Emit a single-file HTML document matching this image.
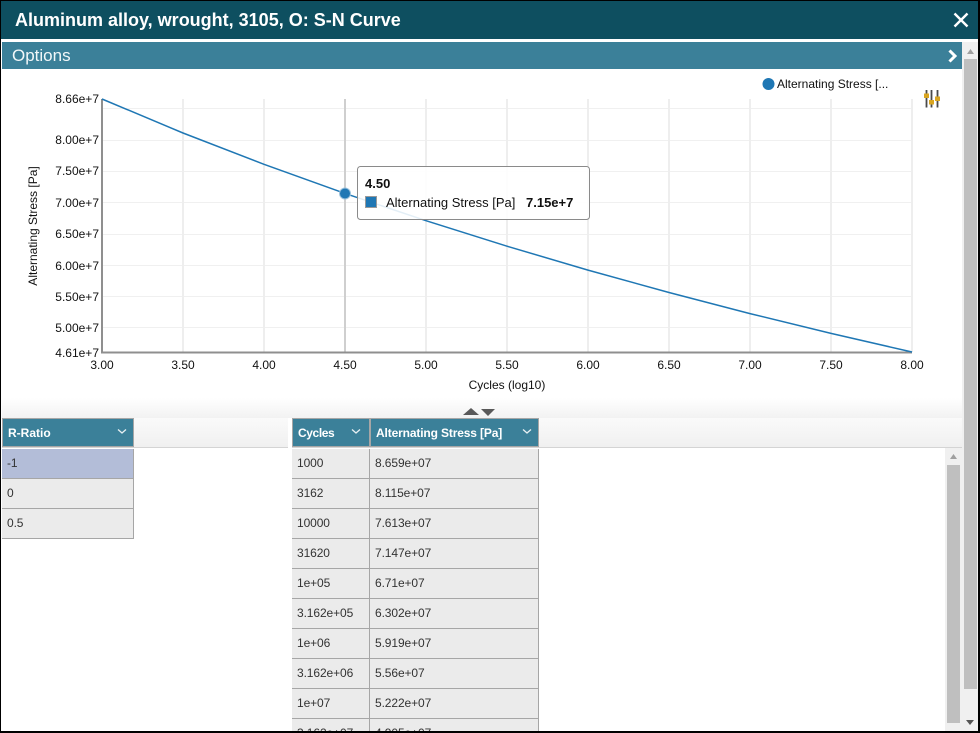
<!DOCTYPE html>
<html><head><meta charset="utf-8">
<style>
html,body{margin:0;padding:0;background:#fff;width:980px;height:733px;overflow:hidden}
body{position:relative;font-family:"Liberation Sans",sans-serif;color:#111}
.a{position:absolute}
.t{position:absolute;white-space:nowrap}
.hd{position:absolute;background:#3b8099;border:1px solid #a6a6a6;box-sizing:border-box;color:#fff;font-weight:bold;font-size:12px;line-height:28px;padding-left:5px}
.hd svg{position:absolute;top:9px}
.c{position:absolute;box-sizing:border-box;background:#ebebeb;border-right:1px solid #a6a6a6;border-bottom:1px solid #a6a6a6;font-size:12px;line-height:29px;padding-left:5px;color:#333;height:30px;letter-spacing:-.1px}
svg text{font-family:"Liberation Sans",sans-serif;font-size:12px;fill:#111}
#wrap{position:absolute;left:0;top:0;width:980px;height:733px;overflow:hidden}
</style></head><body>
<div id="wrap">
<div class="a" style="left:0;top:0;width:980px;height:39px;background:#0e4f60"></div>
<div class="t" style="left:15px;top:9px;font-size:18px;font-weight:bold;color:#fff;line-height:22px">Aluminum alloy, wrought, 3105, O: S-N Curve</div>
<svg class="a" style="left:952px;top:11px" width="18" height="18"><path d="M2.5 2.5L15.5 15.5M15.5 2.5L2.5 15.5" stroke="#fff" stroke-width="2.4" fill="none"/></svg>
<div class="a" style="left:2px;top:42px;width:960px;height:27px;background:#3b8099"></div>
<div class="t" style="left:12px;top:46px;font-size:17px;color:#f2f7f9;line-height:20px">Options</div>
<svg class="a" style="left:946px;top:48px" width="14" height="16"><path d="M3.5 2.5L9 8L3.5 13.500" stroke="#fff" stroke-width="3" fill="none"/></svg>

<svg class="a" style="left:0;top:70px" width="964" height="345" viewBox="0 70 964 345">
<g stroke="#f0f0f0" stroke-width="1" fill="none">
<path d="M102 108.5H912M102 140.5H912M102 171.5H912M102 202.5H912M102 234.5H912M102 265.5H912M102 296.5H912M102 327.5H912"/>
</g>
<g stroke="#eeeeee" stroke-width="2" fill="none">
<path d="M183 99V352M264 99V352M426 99V352M507 99V352M588 99V352M669 99V352M750 99V352M831 99V352M912 99V352"/>
</g>
<path d="M345 99V352" stroke="#cfcfcf" stroke-width="2"/>
<path d="M102 99V352.500H912" stroke="#8f8f8f" stroke-width="2" fill="none"/>
<polyline fill="none" stroke="#1f77b4" stroke-width="1.5" points="102,99 183,133 264,164.300 345,193.400 426,220.700 507,246.200 588,270.100 669,292.500 750,313.600 831,333.400 912,352"/>
<circle cx="345" cy="193.500" r="5.500" fill="#1f77b4" stroke="#9dc3dd" stroke-width="1"/>
<g text-anchor="end">
<text x="99" y="103">8.66e+7</text><text x="99" y="144">8.00e+7</text><text x="99" y="175">7.50e+7</text><text x="99" y="207">7.00e+7</text><text x="99" y="238">6.50e+7</text><text x="99" y="270">6.00e+7</text><text x="99" y="301">5.50e+7</text><text x="99" y="332">5.00e+7</text><text x="99" y="357">4.61e+7</text>
</g>
<g text-anchor="middle">
<text x="102" y="369">3.00</text><text x="183" y="369">3.50</text><text x="264" y="369">4.00</text><text x="345" y="369">4.50</text><text x="426" y="369">5.00</text><text x="507" y="369">5.50</text><text x="588" y="369">6.00</text><text x="669" y="369">6.50</text><text x="750" y="369">7.00</text><text x="831" y="369">7.50</text><text x="912" y="369">8.00</text>
<text x="507" y="389">Cycles (log10)</text>
<text transform="translate(37 226) rotate(-90)">Alternating Stress [Pa]</text>
</g>
<circle cx="768.500" cy="84" r="6" fill="#1f77b4"/>
<text x="777" y="88">Alternating Stress [...</text>
<g fill="none" stroke="#4a4a4a" stroke-width="1.800"><path d="M926.500 90V107.500M931.500 90V107.500M937.500 90V107.500"/></g>
<g fill="#d9a520"><rect x="924" y="93.500" width="5" height="4.500"/><rect x="929" y="100" width="5" height="4.500"/><rect x="935" y="96.500" width="5" height="4.500"/></g>
<rect x="357.500" y="166.500" width="232" height="53" rx="3" fill="#fff" fill-opacity=".88" stroke="#8a8a8a"/>
<text x="365" y="188" style="font-weight:bold;font-size:13px">4.50</text>
<rect x="365.500" y="196.500" width="11" height="11" fill="#1f77b4" stroke="#9a9a9a"/>
<text x="386" y="207" style="font-size:13px">Alternating Stress [Pa]</text>
<text x="526" y="207" style="font-weight:bold;font-size:13px">7.15e+7</text>
</svg>

<div class="a" style="left:2px;top:398px;width:962px;height:20px;background:linear-gradient(#fff,#f2f2f2)"></div>
<svg class="a" style="left:462px;top:407px" width="34" height="9"><path d="M1 8L9 1L17 8Z" fill="#595959"/><path d="M19 2H33L26 9Z" fill="#595959"/></svg>
<div class="a" style="left:2px;top:418px;width:286px;height:30px;background:linear-gradient(#fafafa,#f0f0f0);border-bottom:1px solid #d4d4d4;box-sizing:border-box"></div>
<div class="a" style="left:292px;top:418px;width:670px;height:30px;background:linear-gradient(#fafafa,#f0f0f0);border-bottom:1px solid #d4d4d4;box-sizing:border-box"></div>

<div class="hd" style="left:2px;top:418px;width:132px;height:29px">R-Ratio<svg style="left:113px" width="12" height="8"><path d="M2 1.500L6 5L10 1.500" stroke="#e8f0f3" stroke-width="1.300" fill="none"/></svg></div>
<div class="c" style="left:2px;top:449px;width:132px;background:#b3bdd8">-1</div>
<div class="c" style="left:2px;top:479px;width:132px">0</div>
<div class="c" style="left:2px;top:509px;width:132px">0.5</div>

<div class="hd" style="left:292px;top:418px;width:78px;height:29px;padding-left:5px;letter-spacing:-.4px">Cycles<svg style="left:57px" width="12" height="8"><path d="M2 1.500L6 5L10 1.500" stroke="#e8f0f3" stroke-width="1.300" fill="none"/></svg></div>
<div class="hd" style="left:370px;top:418px;width:169px;height:29px;padding-left:5px;letter-spacing:-.14px">Alternating Stress [Pa]<svg style="left:150px" width="12" height="8"><path d="M2 1.500L6 5L10 1.500" stroke="#e8f0f3" stroke-width="1.300" fill="none"/></svg></div>

<div class="c" style="left:292px;top:449px;width:78px">1000</div><div class="c" style="left:370px;top:449px;width:169px">8.659e+07</div>
<div class="c" style="left:292px;top:479px;width:78px">3162</div><div class="c" style="left:370px;top:479px;width:169px">8.115e+07</div>
<div class="c" style="left:292px;top:509px;width:78px">10000</div><div class="c" style="left:370px;top:509px;width:169px">7.613e+07</div>
<div class="c" style="left:292px;top:539px;width:78px">31620</div><div class="c" style="left:370px;top:539px;width:169px">7.147e+07</div>
<div class="c" style="left:292px;top:569px;width:78px">1e+05</div><div class="c" style="left:370px;top:569px;width:169px">6.71e+07</div>
<div class="c" style="left:292px;top:599px;width:78px">3.162e+05</div><div class="c" style="left:370px;top:599px;width:169px">6.302e+07</div>
<div class="c" style="left:292px;top:629px;width:78px">1e+06</div><div class="c" style="left:370px;top:629px;width:169px">5.919e+07</div>
<div class="c" style="left:292px;top:659px;width:78px">3.162e+06</div><div class="c" style="left:370px;top:659px;width:169px">5.56e+07</div>
<div class="c" style="left:292px;top:689px;width:78px">1e+07</div><div class="c" style="left:370px;top:689px;width:169px">5.222e+07</div>
<div class="c" style="left:292px;top:719px;width:78px">3.162e+07</div><div class="c" style="left:370px;top:719px;width:169px">4.905e+07</div>

<div class="a" style="left:945px;top:448px;width:17px;height:283px;background:#f0f0f0"></div>
<div class="a" style="left:947px;top:465px;width:13px;height:258px;background:#bfbfbf"></div>
<svg class="a" style="left:949px;top:453px" width="9" height="6"><path d="M1 6L4.500 1L8 6Z" fill="#a0a0a0"/></svg>

<div class="a" style="left:962px;top:42px;width:16px;height:689px;background:#f0f0f0"></div>
<div class="a" style="left:964px;top:59px;width:13px;height:630px;background:#bfbfbf"></div>
<svg class="a" style="left:966px;top:48px" width="9" height="6"><path d="M1 6L4.500 1L8 6Z" fill="#a0a0a0"/></svg>
<svg class="a" style="left:966px;top:719px" width="9" height="6"><path d="M0 1H8L4 6Z" fill="#555"/></svg>

<div class="a" style="left:0;top:0;width:980px;height:1px;background:#000"></div>
<div class="a" style="left:0;top:0;width:1px;height:733px;background:#000"></div>
<div class="a" style="left:978px;top:0;width:2px;height:733px;background:#000"></div>
<div class="a" style="left:0;top:731px;width:980px;height:2px;background:#000"></div>
</div>
</body></html>
